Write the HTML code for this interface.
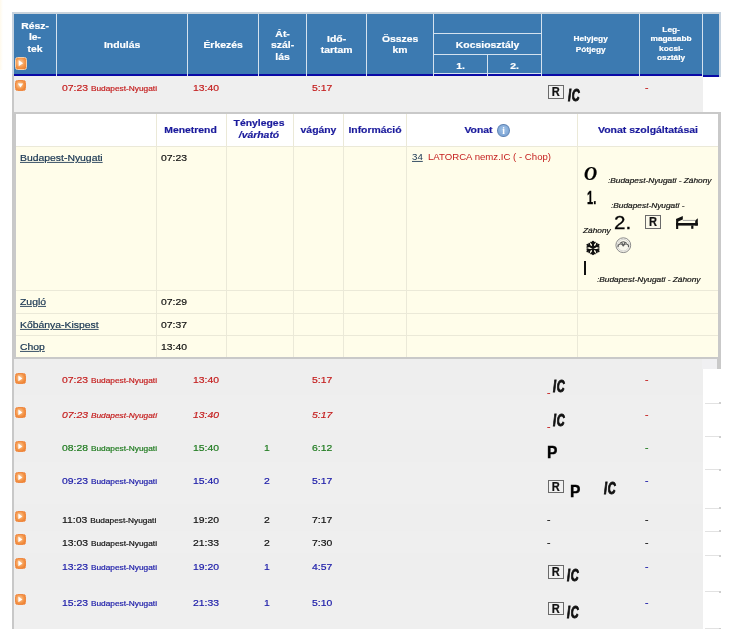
<!DOCTYPE html>
<html lang="hu"><head><meta charset="utf-8"><title>ELVIRA</title>
<style>
html,body{margin:0;padding:0;background:#fff;}
body{width:732px;height:629px;position:relative;overflow:hidden;font-family:"Liberation Sans",Arial,sans-serif;font-size:11px;color:#000;-webkit-text-stroke:.22px currentColor;}
.a{position:absolute;white-space:nowrap;line-height:10.4px;}
.hd{position:absolute;background:#3c7ab1;color:#fff;font-weight:bold;text-align:center;}
.hd span{position:absolute;left:0;right:0;text-align:center;line-height:13.65px;transform:scale(.945,.85);transform-origin:50% 50%;}
.t{line-height:11px;transform-origin:0 9.5px;transform:scale(.945,.85);}
.dk{position:absolute;background:#0a0aa6;}
.sm{font-size:8.8px;}
.red{color:#c41d1d;} .grn{color:#1e7a1e;} .blu{color:#1a1aa8;} .blk{color:#111;}
.row{position:absolute;left:14px;width:688.5px;background:#efefef;}
.btn{position:absolute;width:9px;height:9px;border:1px solid #f6cfa8;border-radius:2.5px;background:radial-gradient(circle at 42% 42%,#fcd2a8 0%,#f4964a 55%,#eb7724 100%);}
.btn.nb{border-color:#ef8a44;}
.btn svg{position:absolute;left:0;top:0;}
.rbox{position:absolute;letter-spacing:0;width:13.6px;height:11.4px;border:1px solid #6a6a6a;background:#f1f1f1;color:#111;font-weight:bold;font-size:12.6px;line-height:13.4px;text-align:center;}
.rbox b{display:block;transform:scaleX(.88);}
.ic{position:absolute;font-weight:bold;font-style:italic;font-size:16.8px;line-height:1;color:#111;transform-origin:0 0;transform:scaleX(.65);letter-spacing:1.2px;-webkit-text-stroke:1px #111;}
.pp{position:absolute;font-weight:bold;font-size:16.4px;line-height:1;color:#000;transform-origin:0 0;transform:scaleX(.95);-webkit-text-stroke:.4px #000;}
.dt{position:absolute;background:#fffdea;}
.vl{position:absolute;width:1px;background:#ebe9d8;}
.hl{position:absolute;height:1px;background:#ebe9d8;}
.dh{position:absolute;color:#1a1a9c;font-weight:bold;text-align:center;line-height:13.3px;transform:scale(.945,.85);transform-origin:50% 50%;}
a{color:#15324f;text-decoration:underline;}
.it{font-style:italic;font-size:8.8px;line-height:8.8px;color:#111;transform-origin:0 7.4px;transform:scale(.945,.85);margin-top:-.75px;}
</style></head><body>
<div id="page" style="position:absolute;left:0;top:0;width:732px;height:629px;will-change:transform">

<div class="a" style="left:0;top:0;width:3px;height:70px;background:linear-gradient(to right,#fffaec,#fff)"></div>
<div class="a" style="left:12px;top:12px;width:709px;height:2px;background:#c9d3dc"></div>
<div class="a" style="left:12px;top:12px;width:2px;height:617px;background:#c8c8c8"></div>
<div class="a" style="left:12px;top:12px;width:2px;height:62px;background:#c5d2df"></div>
<div class="a" style="left:14px;top:13.5px;width:706px;height:62.5px;background:#d4e2ef"></div>
<div class="hd" style="left:14px;top:13.5px;width:42px;height:60.599999999999994px"><span style="top:3.43px">Rész-<br>le-<br>tek</span></div>
<div class="dk" style="left:14px;top:74.1px;width:42px;height:2.4000000000000057px"></div>
<div class="hd" style="left:56.8px;top:13.5px;width:130.2px;height:60.599999999999994px"><span style="top:24.48px">Indulás</span></div>
<div class="dk" style="left:56.8px;top:74.1px;width:130.2px;height:2.4000000000000057px"></div>
<div class="hd" style="left:187.8px;top:13.5px;width:70.19999999999999px;height:60.599999999999994px"><span style="top:24.48px">Érkezés</span></div>
<div class="dk" style="left:187.8px;top:74.1px;width:70.19999999999999px;height:2.4000000000000057px"></div>
<div class="hd" style="left:258.8px;top:13.5px;width:47.19999999999999px;height:60.599999999999994px"><span style="top:11.12px">Át-<br>szál-<br>lás</span></div>
<div class="dk" style="left:258.8px;top:74.1px;width:47.19999999999999px;height:2.4000000000000057px"></div>
<div class="hd" style="left:306.8px;top:13.5px;width:59.19999999999999px;height:60.0px"><span style="top:17.95px">Idő-<br>tartam</span></div>
<div class="dk" style="left:306.8px;top:73.5px;width:59.19999999999999px;height:2.200000000000003px"></div>
<div class="hd" style="left:366.8px;top:13.5px;width:66.19999999999999px;height:60.0px"><span style="top:17.95px">Összes<br>km</span></div>
<div class="dk" style="left:366.8px;top:73.5px;width:66.19999999999999px;height:2.200000000000003px"></div>
<div class="hd" style="left:433.8px;top:13.5px;width:107.2px;height:19.2px"></div>
<div class="hd" style="left:433.8px;top:33.7px;width:107.2px;height:20px"><span style="top:4.48px">Kocsiosztály</span></div>
<div class="hd" style="left:433.8px;top:54.7px;width:53.2px;height:18.8px"><span style="top:3.98px">1.</span></div>
<div class="hd" style="left:487.8px;top:54.7px;width:53.2px;height:18.8px"><span style="top:3.98px">2.</span></div>
<div class="dk" style="left:433.8px;top:73.5px;width:53.19999999999999px;height:2.200000000000003px"></div>
<div class="dk" style="left:487.8px;top:73.5px;width:53.19999999999999px;height:2.200000000000003px"></div>
<div class="hd sm" style="left:541.8px;top:13.5px;width:97.4px;height:60px"><span style="top:18.4px;line-height:12px">Helyjegy<br>Pótjegy</span></div>
<div class="dk" style="left:541.8px;top:73.5px;width:97.40000000000009px;height:2.200000000000003px"></div>
<div class="hd sm" style="left:640px;top:13.5px;width:62.2px;height:60px"><span style="top:8.88px;line-height:11.06px">Leg-<br>magasabb<br>kocsi-<br>osztály</span></div>
<div class="dk" style="left:640px;top:73.5px;width:62.200000000000045px;height:2.200000000000003px"></div>
<div class="a" style="left:719px;top:12px;width:1.7px;height:64.5px;background:#c5d2df"></div>
<div class="hd" style="left:703.2px;top:13.5px;width:15.8px;height:61.2px"></div>
<div class="dk" style="left:703.2px;top:74.7px;width:15.8px;height:1.9px"></div>
<div class="btn" style="width:10px;height:10.6px;left:14.8px;top:57.4px"><svg width="10" height="10.6" viewBox="0 0 9 9"><polygon points="2.4,1.6 2.4,7.2 6.4,4.4" fill="#fff"/></svg></div>
<div class="row" style="top:76px;height:283px;background:#efefef"></div>
<div class="a t red" style="left:61.8px;top:81.6px;">07:23 <span class="sm">Budapest-Nyugati</span></div>
<div class="a t red" style="left:193px;top:81.6px;">13:40</div>
<div class="a t red" style="left:311.5px;top:81.6px;">5:17</div>
<div class="a t red" style="left:645px;top:81.6px;">-</div>
<div class="row" style="top:359px;height:36px;background:#eeeeee"></div>
<div class="a t red" style="left:61.8px;top:374.1px;">07:23 <span class="sm">Budapest-Nyugati</span></div>
<div class="a t red" style="left:193px;top:374.1px;">13:40</div>
<div class="a t red" style="left:311.5px;top:374.1px;">5:17</div>
<div class="a t red" style="left:645px;top:374.1px;">-</div>
<div class="row" style="top:395px;height:35px;background:#efefef"></div>
<div class="a t red" style="left:61.8px;top:409.1px;font-style:italic;">07:23 <span class="sm">Budapest-Nyugati</span></div>
<div class="a t red" style="left:193px;top:409.1px;font-style:italic;">13:40</div>
<div class="a t red" style="left:311.5px;top:409.1px;font-style:italic;">5:17</div>
<div class="a t red" style="left:645px;top:409.1px;">-</div>
<div class="row" style="top:430px;height:32px;background:#eeeeee"></div>
<div class="a t grn" style="left:61.8px;top:442.4px;">08:28 <span class="sm">Budapest-Nyugati</span></div>
<div class="a t grn" style="left:193px;top:442.4px;">15:40</div>
<div class="a t grn" style="left:264px;top:442.4px;">1</div>
<div class="a t grn" style="left:311.5px;top:442.4px;">6:12</div>
<div class="a t grn" style="left:645px;top:442.4px;">-</div>
<div class="row" style="top:462px;height:42px;background:#efefef"></div>
<div class="a t blu" style="left:61.8px;top:474.8px;">09:23 <span class="sm">Budapest-Nyugati</span></div>
<div class="a t blu" style="left:193px;top:474.8px;">15:40</div>
<div class="a t blu" style="left:264px;top:474.8px;">2</div>
<div class="a t blu" style="left:311.5px;top:474.8px;">5:17</div>
<div class="a t blu" style="left:645px;top:474.8px;">-</div>
<div class="row" style="top:504px;height:27px;background:#eeeeee"></div>
<div class="a t blk" style="left:61.8px;top:513.8px;">11:03 <span class="sm">Budapest-Nyugati</span></div>
<div class="a t blk" style="left:193px;top:513.8px;">19:20</div>
<div class="a t blk" style="left:264px;top:513.8px;">2</div>
<div class="a t blk" style="left:311.5px;top:513.8px;">7:17</div>
<div class="a t blk" style="left:645px;top:513.8px;">-</div>
<div class="row" style="top:531px;height:22px;background:#efefef"></div>
<div class="a t blk" style="left:61.8px;top:536.8px;">13:03 <span class="sm">Budapest-Nyugati</span></div>
<div class="a t blk" style="left:193px;top:536.8px;">21:33</div>
<div class="a t blk" style="left:264px;top:536.8px;">2</div>
<div class="a t blk" style="left:311.5px;top:536.8px;">7:30</div>
<div class="a t blk" style="left:645px;top:536.8px;">-</div>
<div class="row" style="top:553px;height:37px;background:#eeeeee"></div>
<div class="a t blu" style="left:61.8px;top:560.8px;">13:23 <span class="sm">Budapest-Nyugati</span></div>
<div class="a t blu" style="left:193px;top:560.8px;">19:20</div>
<div class="a t blu" style="left:264px;top:560.8px;">1</div>
<div class="a t blu" style="left:311.5px;top:560.8px;">4:57</div>
<div class="a t blu" style="left:645px;top:560.8px;">-</div>
<div class="row" style="top:590px;height:39px;background:#efefef"></div>
<div class="a t blu" style="left:61.8px;top:596.8px;">15:23 <span class="sm">Budapest-Nyugati</span></div>
<div class="a t blu" style="left:193px;top:596.8px;">21:33</div>
<div class="a t blu" style="left:264px;top:596.8px;">1</div>
<div class="a t blu" style="left:311.5px;top:596.8px;">5:10</div>
<div class="a t blu" style="left:645px;top:596.8px;">-</div>
<div class="btn nb" style="left:15.2px;top:79.8px"><svg width="9" height="9" viewBox="0 0 9 9"><polygon points="1.8,2.6 7.2,2.6 4.5,6.6" fill="#fff"/></svg></div>
<div class="btn nb" style="left:15.2px;top:372.8px"><svg width="9" height="9" viewBox="0 0 9 9"><polygon points="2.4,1.6 2.4,7.2 6.4,4.4" fill="#fff"/></svg></div>
<div class="btn nb" style="left:15.2px;top:406.8px"><svg width="9" height="9" viewBox="0 0 9 9"><polygon points="2.4,1.6 2.4,7.2 6.4,4.4" fill="#fff"/></svg></div>
<div class="btn nb" style="left:15.2px;top:440.7px"><svg width="9" height="9" viewBox="0 0 9 9"><polygon points="2.4,1.6 2.4,7.2 6.4,4.4" fill="#fff"/></svg></div>
<div class="btn nb" style="left:15.2px;top:472.2px"><svg width="9" height="9" viewBox="0 0 9 9"><polygon points="2.4,1.6 2.4,7.2 6.4,4.4" fill="#fff"/></svg></div>
<div class="btn nb" style="left:15.2px;top:510.7px"><svg width="9" height="9" viewBox="0 0 9 9"><polygon points="2.4,1.6 2.4,7.2 6.4,4.4" fill="#fff"/></svg></div>
<div class="btn nb" style="left:15.2px;top:533.7px"><svg width="9" height="9" viewBox="0 0 9 9"><polygon points="2.4,1.6 2.4,7.2 6.4,4.4" fill="#fff"/></svg></div>
<div class="btn nb" style="left:15.2px;top:557.7px"><svg width="9" height="9" viewBox="0 0 9 9"><polygon points="2.4,1.6 2.4,7.2 6.4,4.4" fill="#fff"/></svg></div>
<div class="btn nb" style="left:15.2px;top:593.7px"><svg width="9" height="9" viewBox="0 0 9 9"><polygon points="2.4,1.6 2.4,7.2 6.4,4.4" fill="#fff"/></svg></div>
<div class="rbox" style="left:548.2px;top:85.2px"><b>R</b></div>
<div class="ic" style="left:567.6px;top:87.6px">IC</div>
<div class="a t red" style="left:546.5px;top:386.5px">-</div>
<div class="ic" style="left:553px;top:379.1px">IC</div>
<div class="a t red" style="left:546.5px;top:420.5px">-</div>
<div class="ic" style="left:553px;top:413.3px">IC</div>
<div class="pp" style="left:547.3px;top:444.4px">P</div>
<div class="rbox" style="left:548.2px;top:479.6px"><b>R</b></div>
<div class="pp" style="left:569.8px;top:483.2px">P</div>
<div class="ic" style="left:603.8px;top:481.4px">IC</div>
<div class="a t blk" style="left:547px;top:514.3px">-</div>
<div class="a t blk" style="left:547px;top:537.3px">-</div>
<div class="rbox" style="left:548.2px;top:565.2px"><b>R</b></div>
<div class="ic" style="left:567.4px;top:568.1px">IC</div>
<div class="rbox" style="left:548.2px;top:602px"><b>R</b></div>
<div class="ic" style="left:567.4px;top:604.7px">IC</div>
<div class="a" style="left:702px;top:356px;width:15.5px;height:12.5px;background:#f0f0f2"></div>
<div class="a" style="left:717.3px;top:356px;width:3.7px;height:13.2px;background:#c9c9c9"></div>
<div class="a" style="left:14px;top:112px;width:707px;height:247.3px;background:#c9c9c9"></div>
<div class="a" style="left:16px;top:114.2px;width:701.6px;height:32px;background:#fff"></div>
<div class="dt" style="left:16px;top:147px;width:701.6px;height:210.3px"></div>
<div class="vl" style="left:155.5px;top:114.2px;height:243px"></div>
<div class="vl" style="left:225.7px;top:114.2px;height:243px"></div>
<div class="vl" style="left:293px;top:114.2px;height:243px"></div>
<div class="vl" style="left:343px;top:114.2px;height:243px"></div>
<div class="vl" style="left:406.4px;top:114.2px;height:243px"></div>
<div class="vl" style="left:577px;top:114.2px;height:243px"></div>
<div class="hl" style="left:16px;top:146px;width:701.6px"></div>
<div class="hl" style="left:16px;top:290.3px;width:701.6px"></div>
<div class="hl" style="left:16px;top:313px;width:701.6px"></div>
<div class="hl" style="left:16px;top:335px;width:701.6px"></div>
<div class="dh" style="left:155px;top:123.6px;width:71px;">Menetrend</div>
<div class="dh" style="left:225px;top:116.4px;width:68px;">Tényleges<br><i>/várható</i></div>
<div class="dh" style="left:294px;top:123.6px;width:49px;">vágány</div>
<div class="dh" style="left:344px;top:123.6px;width:62px;">Információ</div>
<div class="dh" style="left:399px;top:123.6px;width:159px;">Vonat</div>
<div class="dh" style="left:578px;top:123.6px;width:140px;font-size:11.1px">Vonat szolgáltatásai</div>
<div class="a" style="left:497.2px;top:123.5px;width:10.6px;height:11.5px;border:1.3px solid #5f84b4;border-radius:50%;background:radial-gradient(circle at 50% 40%,#a3c4e8,#6f9ace);color:#fff;font-weight:bold;font-size:9.5px;line-height:13.6px;text-align:center;font-family:'Liberation Serif',serif;-webkit-text-stroke:0">i</div>
<div class="a t" style="left:20px;top:152px"><a>Budapest-Nyugati</a></div>
<div class="a t blk" style="left:160.7px;top:152px">07:23</div>
<div class="a t" style="left:20px;top:295.8px"><a>Zugló</a></div>
<div class="a t blk" style="left:160.7px;top:295.8px">07:29</div>
<div class="a t" style="left:20px;top:318.8px"><a>Kőbánya-Kispest</a></div>
<div class="a t blk" style="left:160.7px;top:318.8px">07:37</div>
<div class="a t" style="left:20px;top:341px"><a>Chop</a></div>
<div class="a t blk" style="left:160.7px;top:341px">13:40</div>
<div class="a" style="left:412.3px;top:151.5px;font-size:10.26px;line-height:1;transform-origin:0 8.6px;transform:scale(.945,.85);-webkit-text-stroke:0"><a>34</a></div>
<div class="a red" style="left:428.2px;top:151.5px;font-size:10.18px;line-height:1;transform-origin:0 8.6px;transform:scale(.945,.85);-webkit-text-stroke:0">LATORCA nemz.IC ( - Chop)</div>
<div class="a" style="left:583.6px;top:163.8px;font-family:'Liberation Serif',serif;font-weight:bold;font-style:italic;font-size:19.5px;line-height:1;letter-spacing:0;transform-origin:0 0;transform:scaleX(.93)">O</div>
<div class="a it" style="left:608px;top:177px">:Budapest-Nyugati - Záhony</div>
<div class="a" style="left:587.4px;top:189.6px;font-size:17.8px;line-height:1;letter-spacing:0;font-weight:bold;-webkit-text-stroke:.4px #111;transform-origin:0 0;transform:scaleX(.62)">1.</div>
<div class="a it" style="left:610.7px;top:202px">:Budapest-Nyugati -</div>
<div class="a it" style="left:583px;top:227px">Záhony</div>
<div class="a" style="left:614.2px;top:214px;font-size:18.4px;line-height:1;letter-spacing:0;-webkit-text-stroke:.3px #111;transform-origin:0 0;transform:scaleX(1.12)">2.</div>
<div class="rbox" style="left:645px;top:215.4px;width:14px;height:11.5px;background:#fbf9ea"><b>R</b></div>
<svg class="a" style="left:675px;top:215px" width="25" height="15" viewBox="0 0 25 15"><g fill="#111"><rect x="1.1" y="3.9" width="2.1" height="10.1"/><polygon points="1.1,3.9 7.8,1.1 7.8,4.6 3.2,6.6"/><rect x="1.1" y="8" width="21.7" height="2.6"/><polygon points="20.2,5.6 22.8,3.3 22.8,10.6 20.2,10.6"/><rect x="16.2" y="10.4" width="2.2" height="3.4"/></g><rect x="7.8" y="4.9" width="12.6" height="0.9" fill="#999"/></svg>
<svg class="a" style="left:584.9px;top:239.8px" width="16" height="16" viewBox="-8 -8 16 16"><g stroke="#111" stroke-width="2.2" stroke-linecap="round" fill="none"><path d="M0-6.1V6.1M-5.5-3.15L5.5 3.15M-5.5 3.15L5.5-3.15"/></g><g stroke="#111" stroke-width="1.6" stroke-linecap="round" fill="none"><path d="M-2-5.6L0-3.9L2-5.6M-2 5.6L0 3.9L2 5.6M-5.85-1.1L-3.4-1.95L-3.85-4.5M5.85 1.1L3.4 1.95L3.85 4.5M-5.85 1.1L-3.4 1.95L-3.85 4.5M5.85-1.1L3.4-1.95L3.85-4.5"/></g></svg>
<svg class="a" style="left:614.9px;top:237.4px" width="17" height="17" viewBox="0 0 17 17"><circle cx="8.3" cy="8.2" r="7.4" fill="#f8f6ec" stroke="#8a8a8a" stroke-width="1"/><circle cx="8.3" cy="8.2" r="5.8" fill="none" stroke="#c4c4c4" stroke-width=".7"/><g fill="none" stroke="#5c5c5c" stroke-width="1.05"><path d="M3.1 10.2A2.6 2.6 0 0 1 8.3 9.2A2.6 2.6 0 0 1 13.5 10.2"/><path d="M4.8 6.4Q8.3 3.2 11.8 6.4M6.6 5L8.3 9M10 5L8.3 9"/></g></svg>
<div class="a" style="left:583.9px;top:261.2px;width:2.2px;height:14.3px;background:#111"></div>
<div class="a it" style="left:597.1px;top:276px">:Budapest-Nyugati - Záhony</div>
<div class="a" style="left:705px;top:402.5px;width:15px;height:1px;background:#e2e2e2"></div>
<div class="a" style="left:719px;top:402.0px;width:2px;height:2px;background:#cfcfcf"></div>
<div class="a" style="left:705px;top:436px;width:15px;height:1px;background:#e2e2e2"></div>
<div class="a" style="left:719px;top:435.5px;width:2px;height:2px;background:#cfcfcf"></div>
<div class="a" style="left:705px;top:469px;width:15px;height:1px;background:#e2e2e2"></div>
<div class="a" style="left:719px;top:468.5px;width:2px;height:2px;background:#cfcfcf"></div>
<div class="a" style="left:705px;top:507.7px;width:15px;height:1px;background:#e2e2e2"></div>
<div class="a" style="left:719px;top:507.2px;width:2px;height:2px;background:#cfcfcf"></div>
<div class="a" style="left:705px;top:530.7px;width:15px;height:1px;background:#e2e2e2"></div>
<div class="a" style="left:719px;top:530.2px;width:2px;height:2px;background:#cfcfcf"></div>
<div class="a" style="left:705px;top:555px;width:15px;height:1px;background:#e2e2e2"></div>
<div class="a" style="left:719px;top:554.5px;width:2px;height:2px;background:#cfcfcf"></div>
<div class="a" style="left:705px;top:591px;width:15px;height:1px;background:#e2e2e2"></div>
<div class="a" style="left:719px;top:590.5px;width:2px;height:2px;background:#cfcfcf"></div>
<div class="a" style="left:705px;top:628px;width:15px;height:1px;background:#e2e2e2"></div>
<div class="a" style="left:719px;top:627.5px;width:2px;height:2px;background:#cfcfcf"></div>
</div>
</body></html>
